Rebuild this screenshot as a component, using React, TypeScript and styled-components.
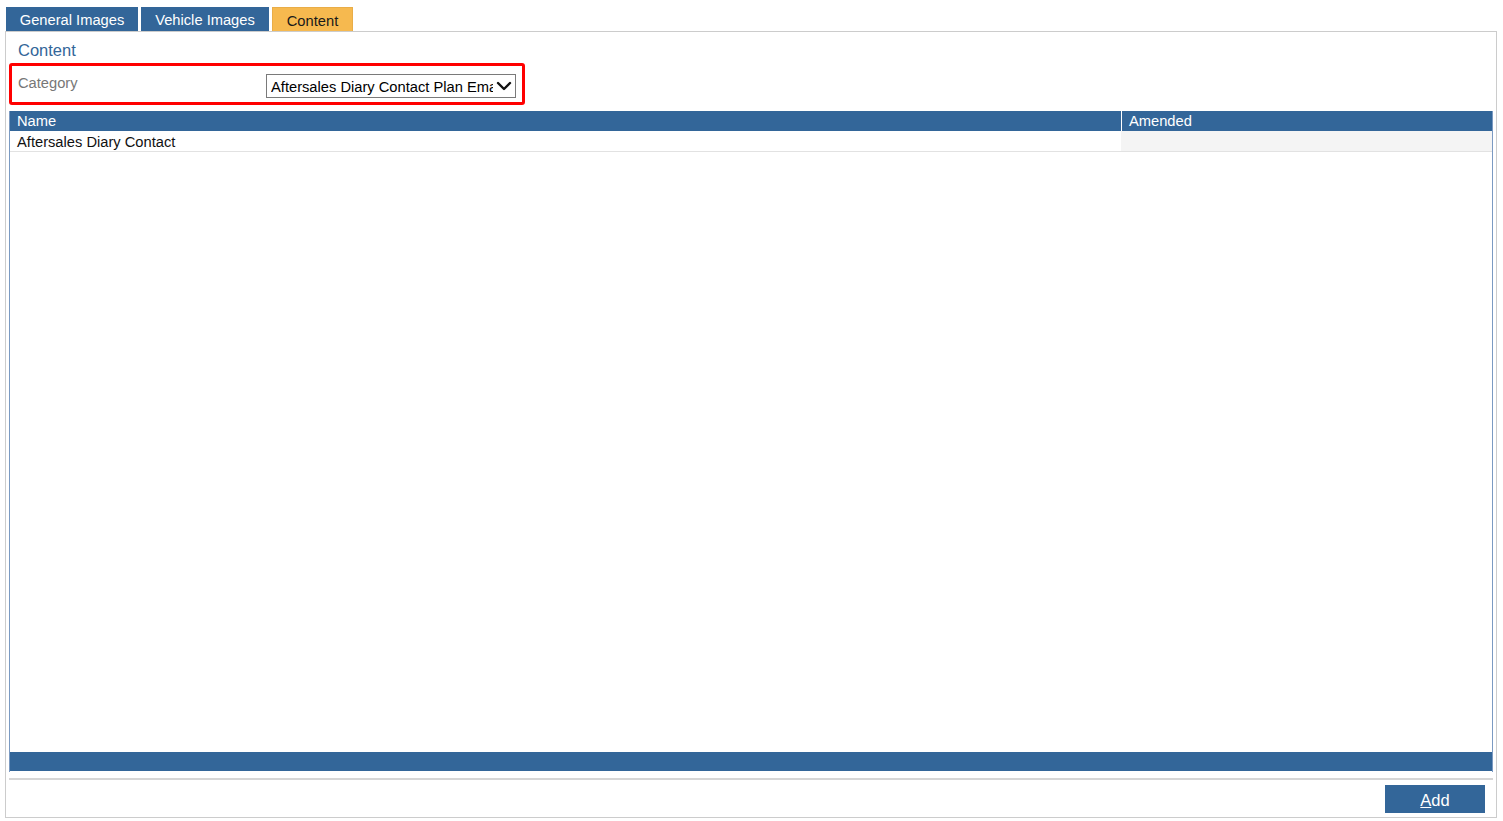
import React from 'react';
import styled, { createGlobalStyle } from 'styled-components';

const GlobalStyle = createGlobalStyle`
  html, body {
    margin: 0;
    padding: 0;
    background: #ffffff;
    font-family: "Liberation Sans", Arial, sans-serif;
    font-size: 14.7px;
  }
`;

const Page = styled.div`
  width: 1503px;
  height: 821px;
  box-sizing: border-box;
  padding: 7px 6px 3px 5px;
  display: flex;
  flex-direction: column;
`;

const TabBar = styled.div`
  display: flex;
  gap: 3px;
  padding-left: 1px;
  height: 24px;
`;

const Tab = styled.div<{ $active?: boolean; $width: number }>`
  display: flex;
  align-items: center;
  justify-content: center;
  box-sizing: border-box;
  width: ${(p) => p.$width}px;
  height: 24px;
  background: ${(p) => (p.$active ? '#f6b94f' : '#336699')};
  color: ${(p) => (p.$active ? '#1a1a1a' : '#ffffff')};
  border: 1px solid ${(p) => (p.$active ? '#e9ad47' : '#336699')};
  border-bottom: none;
  font-size: 14.7px;
  padding-top: ${(p) => (p.$active ? '2px' : '0')};
`;

const Panel = styled.div`
  flex: 1;
  display: flex;
  flex-direction: column;
  border: 1px solid #cccccc;
  padding: 0 3px 4px 3px;
  min-height: 0;
`;

const Heading = styled.div`
  color: #336699;
  font-size: 16.5px;
  padding: 9px 0 4px 9px;
  line-height: 18px;
`;

const FilterBox = styled.div`
  display: flex;
  align-items: center;
  width: 516px;
  height: 42px;
  box-sizing: border-box;
  border: 3px solid #ff0000;
  border-radius: 3px;
`;

const Label = styled.div`
  color: #777777;
  width: 254px;
  padding-left: 6px;
  box-sizing: border-box;
  margin-top: -2px;
`;

const Select = styled.div`
  display: flex;
  align-items: center;
  width: 250px;
  height: 24px;
  box-sizing: border-box;
  border: 1px solid #7a7a7a;
  padding: 0 3px 0 4px;
  margin-top: 4px;
  color: #000000;
`;

const SelectText = styled.span`
  flex: 1;
  overflow: hidden;
  white-space: nowrap;
  padding-top: 1px;
  margin-right: 3px;
`;

const Grid = styled.div`
  margin-top: 6px;
  flex: 1;
  display: flex;
  flex-direction: column;
  border-left: 1px solid #7b9ac2;
  border-right: 1px solid #7b9ac2;
  min-height: 0;
`;

const HeaderRow = styled.div`
  display: grid;
  grid-template-columns: 1111px 1fr;
  background: #336699;
  color: #ffffff;
  height: 20px;
  line-height: 20px;
`;

const HeaderCell = styled.div<{ $divider?: boolean }>`
  padding-left: 7px;
  border-left: ${(p) => (p.$divider ? '1px solid #ffffff' : 'none')};
`;

const DataRow = styled.div`
  display: grid;
  grid-template-columns: 1111px 1fr;
  border-bottom: 1px solid #e2e2e2;
  color: #111111;
`;

const DataCell = styled.div<{ $shaded?: boolean }>`
  box-sizing: border-box;
  height: 20px;
  line-height: 20px;
  padding: 1px 0 0 7px;
  overflow: hidden;
  white-space: nowrap;
  background: ${(p) => (p.$shaded ? '#f4f4f4' : '#ffffff')};
  border-left: ${(p) => (p.$shaded ? '1px solid #f4f4f4' : 'none')};
`;

const GridBody = styled.div`
  flex: 1;
`;

const GridFooter = styled.div`
  height: 19px;
  background: #336699;
  margin-bottom: 1px;
`;

const Separator = styled.div`
  margin-top: 6px;
  border-top: 2px solid #d6d6d6;
`;

const ButtonBar = styled.div`
  display: flex;
  justify-content: flex-end;
  padding: 5px 8px 0 0;
`;

const Button = styled.button`
  width: 100px;
  height: 28px;
  border: none;
  background: #336699;
  color: #ffffff;
  font-family: "Liberation Sans", Arial, sans-serif;
  font-size: 16.5px;
  padding: 2px 0 0 0;
`;

const Chevron = () => (
  <svg width="16" height="14" viewBox="0 0 16 14">
    <polyline points="2,4 8,10 14,4" fill="none" stroke="#111" strokeWidth="2.4" strokeLinecap="round" strokeLinejoin="round" />
  </svg>
);

export default function App() {
  return (
    <Page>
      <GlobalStyle />
      <TabBar>
        <Tab $width={132}>General Images</Tab>
        <Tab $width={128}>Vehicle Images</Tab>
        <Tab $width={81} $active>Content</Tab>
      </TabBar>
      <Panel>
        <Heading>Content</Heading>
        <FilterBox>
          <Label>Category</Label>
          <Select>
            <SelectText>Aftersales Diary Contact Plan Email</SelectText>
            <Chevron />
          </Select>
        </FilterBox>
        <Grid>
          <HeaderRow>
            <HeaderCell>Name</HeaderCell>
            <HeaderCell $divider>Amended</HeaderCell>
          </HeaderRow>
          <DataRow>
            <DataCell>Aftersales Diary Contact</DataCell>
            <DataCell $shaded />
          </DataRow>
          <GridBody />
          <GridFooter />
        </Grid>
        <Separator />
        <ButtonBar>
          <Button>
            <u>A</u>dd
          </Button>
        </ButtonBar>
      </Panel>
    </Page>
  );
}
